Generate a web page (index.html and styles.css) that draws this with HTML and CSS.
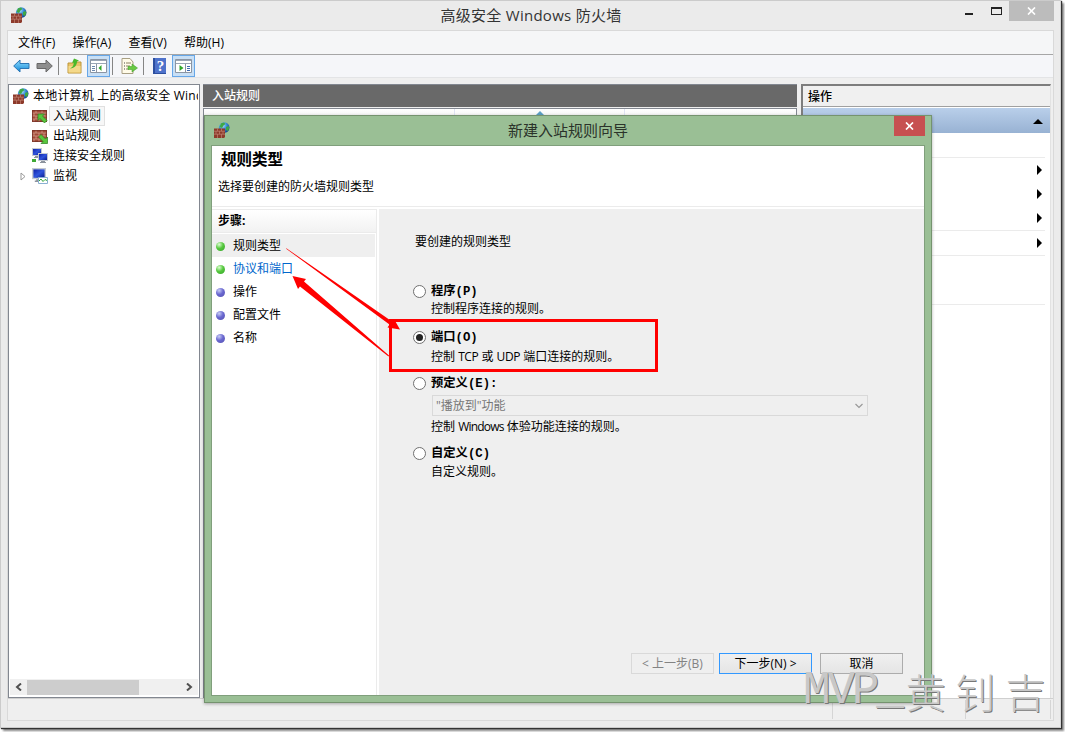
FILE: index.html
```
<!DOCTYPE html>
<html lang="zh-CN">
<head>
    <meta charset="UTF-8">
    <title>高级安全 Windows 防火墙</title>
    <link rel="stylesheet" href="styles.css">
</head>
<body>
    <svg class="defs" width="0" height="0">
        <defs>
            <radialGradient id="globe-fill" cx="35%" cy="30%" r="75%">
                <stop offset="0" stop-color="#b5e8ff"/>
                <stop offset="0.5" stop-color="#3a8fd8"/>
                <stop offset="1" stop-color="#123f8c"/>
            </radialGradient>
            <linearGradient id="blue-arrow" x1="0" y1="0" x2="0" y2="1">
                <stop offset="0" stop-color="#8fdcff"/>
                <stop offset="1" stop-color="#1289d8"/>
            </linearGradient>
            <linearGradient id="screen-fill" x1="0" y1="0" x2="1" y2="1">
                <stop offset="0" stop-color="#1022a8"/>
                <stop offset="0.5" stop-color="#2f55dd"/>
                <stop offset="1" stop-color="#0a1c90"/>
            </linearGradient>
            <symbol id="firewall" viewBox="0 0 16 16">
                <circle cx="10.2" cy="5.5" r="5.3" fill="url(#globe-fill)"/>
                <path d="M7 1.2l3-.7 1.5 1.5-2 1.5L8 6 5.5 5zM12 5l2.5-1 .8 2-1.3 3-2-1z" fill="#3fa845"/>
                <path d="M0 6.5h11V15l-1 1H0z" fill="#8d3a2b"/>
                <path d="M0 9.2h11M0 12.2h11M3.5 6.5v2.7M7.5 6.5v2.7M2 9.2v3M5.5 9.2v3M9 9.2v3M3.5 12.2V16M7.5 12.2V16" stroke="#c98d7c" stroke-width=".6"/>
            </symbol>
            <symbol id="bricks" viewBox="0 0 15 12">
                <path d="M0 0h15v12H0z" fill="#a14a38"/>
                <path d="M0 3h15M0 6h15M0 9h15M4 0v3M10 0v3M2 3v3M7 3v3M12 3v3M4 6v3M10 6v3M2 9v3M7 9v3M12 9v3" stroke="#d5a594" stroke-width=".7"/>
                <path d="M.4 .4h14.2v11.2H.4z" fill="none" stroke="#713026" stroke-width=".8"/>
            </symbol>
            <symbol id="screen" viewBox="0 0 10 10">
                <path d="M0 0h10v8H0z" fill="#c5cad2"/>
                <path d="M1 1h8v6H1z" fill="url(#screen-fill)"/>
                <path d="M3 8h4v1h1v1H2V9h1z" fill="#8d949e"/>
            </symbol>
        </defs>
    </svg>

    <div class="window">
        <div class="titlebar">
            <svg class="app-icon" width="16" height="16"><use href="#firewall"/></svg>
            <h1>高级安全 Windows 防火墙</h1>
            <div class="window-buttons">
                <svg class="min" width="26" height="20"><path d="M0 13h8v2H0z" fill="#222"/></svg>
                <svg class="max" width="18" height="20"><path d="M0 7h11v8H0zM1 9v5h9V9z" fill="#222" fill-rule="evenodd"/></svg>
                <div class="close"><svg width="9" height="8"><path d="M1 .5l7 7M8 .5l-7 7" stroke="#fff" stroke-width="1.7"/></svg></div>
            </div>
        </div>

        <div class="client">
            <div class="menubar">
                <span>文件(F)</span><span>操作(A)</span><span>查看(V)</span><span>帮助(H)</span>
            </div>
            <div class="toolbar">
                <svg width="17" height="14" viewBox="0 0 17 14"><path d="M.7 7L7 1v3.5h9v5H7V13z" fill="url(#blue-arrow)" stroke="#2b76b5"/></svg>
                <svg class="forward" width="17" height="14" viewBox="0 0 17 14"><path d="M16.3 7L10 1v3.5H1v5h9V13z" fill="#8e8e8e" stroke="#686868"/></svg>
                <i class="sep"></i>
                <svg class="folder" width="16" height="16" viewBox="0 0 16 16"><path d="M1 5h5l1-1h7v11H1z" fill="#e9c468" stroke="#bd963b"/><path d="M1.5 8h12v6.5h-12z" fill="#f4d98b"/><path d="M3 10.500C6 9 7 7 6.500 4.500L5 5l2-4.500 5 2-2 1C10 7 8 10 3 10.500z" fill="#49b92c"/></svg>
                <div class="tool-active tree-toggle">
                    <svg width="17" height="16" viewBox="0 0 17 16"><path d="M.5 1.5h16v13H.5z" fill="#fff" stroke="#8b95a3"/><path d="M1 2h15v1H1zM1 5h15v1H1z" fill="#9aa6b6"/><path d="M6.5 6v8" stroke="#8b95a3"/><path d="M2 8.500h3M2 10.500h3M2 12.500h3" stroke="#6b88ad"/><path d="M11.500 7v6l-3-3z" fill="#30a72a"/></svg>
                </div>
                <i class="sep sep-tight"></i>
                <svg width="17" height="16" viewBox="0 0 17 16"><path d="M1 .5h8L12 4v11.5H1z" fill="#fffbe8" stroke="#a89f83"/><path d="M3 5h1M3 8h1M3 11h1" stroke="#444"/><path d="M5 5h5M5 8h4M5 11h3" stroke="#8a8060"/><path d="M7 8.5h4V6l5.5 4-5.5 4v-2.5H7z" fill="#69c943" stroke="#389b24" stroke-width=".5"/></svg>
                <i class="sep"></i>
                <svg class="help" width="13" height="16"><path d="M0 0h13v16H0z" fill="#2c4f9f"/><path d="M2 0h11v15H2z" fill="#4e72cb"/><text x="7.5" y="13" text-anchor="middle">?</text></svg>
                <div class="tool-active action-toggle">
                    <svg width="17" height="16" viewBox="0 0 17 16"><path d="M.5 1.5h16v13H.5z" fill="#fff" stroke="#8b95a3"/><path d="M1 2h15v1H1zM1 5h15v1H1z" fill="#9aa6b6"/><path d="M10.5 6v8" stroke="#8b95a3"/><path d="M12 8.500h3M12 10.500h3M12 12.500h3" stroke="#3d69b0"/><path d="M4.500 7v6l4-3z" fill="#30a72a"/></svg>
                </div>
            </div>

            <div class="panes">
                <div class="tree">
                    <div class="row root"><svg width="16" height="16"><use href="#firewall"/></svg><span>本地计算机 上的高级安全 Wind</span></div>
                    <div class="row"><svg width="16" height="15"><use href="#bricks" y="1" width="15" height="12"/><path d="M6 5h6.500l-2 2 4.500 4.500-2.500 2.500L8 9.500l-2 2z" fill="#58c63d" stroke="#2b7f20" stroke-width=".7"/></svg><span class="selected">入站规则</span></div>
                    <div class="row"><svg width="16" height="15"><use href="#bricks" y="1" width="15" height="12"/><path d="M15.500 14.500H9l2-2L6.500 8 9 5.500l4.500 4.500 2-2z" fill="#58c63d" stroke="#2b7f20" stroke-width=".7"/></svg><span>出站规则</span></div>
                    <div class="row"><svg width="16" height="16"><use href="#screen" width="10" height="10"/><use href="#screen" x="6" y="5" width="10" height="10"/><path d="M0 11h4v3H0z" fill="#3fa935"/></svg><span>连接安全规则</span></div>
                    <div class="row"><svg class="expander" width="6" height="9"><path d="M1 1l4 3.5L1 8z" fill="#fff" stroke="#999"/></svg><svg width="16" height="16"><use href="#screen" width="14" height="14"/><path d="M6.5 9.5h9v6h-9z" fill="#fff" stroke="#8ab0d2"/><path d="M7 13l2-2 2 2.5 2-2 2 1" fill="none" stroke="#30a636"/></svg><span>监视</span></div>
                    <div class="scrollbar">
                        <svg width="7" height="8"><path d="M6 .5L2 4l4 3.5" fill="none" stroke="#505050" stroke-width="2"/></svg>
                        <div class="thumb"></div>
                        <svg width="7" height="8"><path d="M1 .5L5 4 1 7.5" fill="none" stroke="#505050" stroke-width="2"/></svg>
                    </div>
                </div>
                <div class="rules">
                    <h2>入站规则</h2>
                    <div class="rules-list">
                        <div class="columns">
                            <i></i>
                            <i class="sorted"><svg width="8" height="4"><path d="M4 0l4 4H0z" fill="#5c9fc4"/></svg></i>
                        </div>
                    </div>
                </div>
                <div class="actions">
                    <h2>操作</h2>
                    <div class="action-group"><svg width="10" height="5"><path d="M5 0l5 5H0z"/></svg></div>
                    <div class="action first"></div>
                    <div class="action"><svg width="5" height="10"><path d="M0 0l5 5-5 5z"/></svg></div>
                    <div class="action"><svg width="5" height="10"><path d="M0 0l5 5-5 5z"/></svg></div>
                    <div class="action line"><svg width="5" height="10"><path d="M0 0l5 5-5 5z"/></svg></div>
                    <div class="action line"><svg width="5" height="10"><path d="M0 0l5 5-5 5z"/></svg></div>
                    <div class="action last"></div>
                </div>
            </div>
            <div class="statusbar"><i></i><i></i><i></i></div>
        </div>
    </div>

    <div class="dialog">
        <div class="dialog-title">
            <svg width="16" height="16"><use href="#firewall"/></svg>
            <h2>新建入站规则向导</h2>
            <div class="dialog-close"><svg width="9" height="8"><path d="M1 .5l7 7M8 .5l-7 7" stroke="#fff" stroke-width="1.7"/></svg></div>
        </div>
        <div class="dialog-body">
            <div class="heading">
                <h3>规则类型</h3>
                <p>选择要创建的防火墙规则类型</p>
            </div>
            <div class="wizard">
                <div class="steps">
                    <h4>步骤:</h4>
                    <ul>
                        <li class="done current">规则类型</li>
                        <li class="done link">协议和端口</li>
                        <li>操作</li>
                        <li>配置文件</li>
                        <li>名称</li>
                    </ul>
                </div>
                <div class="page">
                    <p class="question">要创建的规则类型</p>
                    <div class="option program">
                        <i class="radio"></i>
                        <div><b>程序(P)</b><p>控制程序连接的规则。</p></div>
                    </div>
                    <div class="option port">
                        <i class="radio checked"></i>
                        <div><b>端口(O)</b><p>控制 <span class="latin">TCP</span> 或 <span class="latin">UDP</span> 端口连接的规则。</p></div>
                    </div>
                    <div class="option predefined">
                        <i class="radio"></i>
                        <div>
                            <b>预定义(E):</b>
                            <div class="select"><span>"播放到"功能</span><svg width="8" height="6"><path d="M.5 1L4 4.500 7.500 1" fill="none" stroke="#999" stroke-width="1.2"/></svg></div>
                            <p>控制 <span class="latin product">Windows</span> 体验功能连接的规则。</p>
                        </div>
                    </div>
                    <div class="option custom">
                        <i class="radio"></i>
                        <div><b>自定义(C)</b><p>自定义规则。</p></div>
                    </div>
                    <div class="buttons">
                        <button class="back" disabled>&lt; 上一步(B)</button>
                        <button class="next">下一步(N) &gt;</button>
                        <button class="cancel">取消</button>
                    </div>
                </div>
            </div>
        </div>
    </div>

    <!-- red callout around the port option -->
    <div class="callout"></div>
    <svg class="arrows" width="1065" height="732">
        <path d="M286 248l.500 1L389.500 324.500l-2 3L400 329.500l-6-10.500-2 2.500z" fill="#f00"/>
        <path d="M389 355.500l-.500 1L300 286.500l-2 2.500-5.500-13 13.500 3-2 2.500z" fill="#f00"/>
    </svg>
    <div class="watermark"><span class="mvp">MVP_</span><span class="name">黄钊吉</span></div>
</body>
</html>
```
FILE: styles.css
```
* {
    box-sizing: border-box;
}
body {
    margin: 0;
    width: 1065px;
    height: 732px;
    overflow: hidden;
    background: #fff;
    font: 12px/16px "Open Sans", "Noto Sans CJK SC", sans-serif;
    color: #000;
}
h1, h2, h3, h4, p, ul {
    margin: 0;
    padding: 0;
    font-size: 12px;
    font-weight: normal;
}
svg {
    display: block;
    flex: none;
}
.defs {
    position: absolute;
}
.window {
    width: 1061px;
    height: 728px;
    border: 1px solid #cbcbcb;
    border-right-color: #d4d4d4;
    background: #ebebeb;
    padding: 0 6px 0 7px;
    box-shadow: 1px 1px 1px #333, 3px 3px 2px #888;
}
.titlebar {
    display: flex;
    height: 29px;
    padding-left: 3px;
}
.app-icon {
    margin-top: 6px;
}
.titlebar h1 {
    flex: 1;
    padding-left: 71px;
    font-size: 15px;
    line-height: 29px;
    text-align: center;
    letter-spacing: .27px;
    color: #333;
}
.window-buttons {
    display: flex;
    width: 90px;
}
.window-buttons .min {
    margin-left: 1px;
}
.window-buttons .max, .window-buttons .min {
    margin-top: -1px;
}
.close {
    display: flex;
    align-items: center;
    justify-content: center;
    width: 45px;
    height: 20px;
    background: #bcbcbc;
}
.client {
    width: 1047px;
    height: 691px;
    margin-left: -1px;
    border: 1px solid #d9d9d9;
    background: #efefef;
}
.menubar {
    display: flex;
    gap: 17.3px;
    height: 24px;
    padding: 4px 10px 0;
    background: #f5f6f7;
    border-bottom: 1px solid #a6a6a6;
}
.toolbar {
    display: flex;
    align-items: center;
    height: 23px;
    padding-left: 5px;
    background: #f5f6f9;
    border-bottom: 1px solid #e3e4e6;
}
.toolbar .forward {
    margin-left: 6px;
}
.sep {
    width: 1px;
    height: 18px;
    margin: 0 8px 0 5px;
    background: #858585;
}
.sep-tight {
    margin-left: 2px;
}
.tool-active {
    display: flex;
    align-items: center;
    justify-content: center;
    width: 23px;
    height: 22px;
    background: #c8dff5;
    border: 1px solid #66a7e8;
}
.tree-toggle {
    margin-left: 4px;
}
.action-toggle {
    margin-left: 6px;
}
.help {
    margin-left: 1px;
}
.help text {
    font: bold 15px "Liberation Serif", serif;
    fill: #fff;
}
.panes {
    display: flex;
    height: 614px;
    margin-top: 6px;
}
.tree {
    display: flex;
    flex-direction: column;
    width: 192px;
    height: 614px;
    border: 1px solid #828790;
    background: #fff;
    padding: 1px;
    overflow: hidden;
}
.row {
    display: flex;
    align-items: center;
    height: 20px;
    padding-left: 22px;
    white-space: nowrap;
    position: relative;
}
.row svg {
    margin-right: 2px;
}
.row .expander {
    position: absolute;
    left: 10px;
}
.row span {
    padding: 0 3px;
    line-height: 18px;
}
.root {
    padding-left: 3px;
    overflow: hidden;
}
.root span {
    padding: 0 0 0 2px;
    letter-spacing: .2px;
}
.selected {
    outline: 1px solid #e0e0e0;
    background: #f7f7f7;
}
.scrollbar {
    display: flex;
    align-items: center;
    height: 16px;
    margin-top: auto;
    margin-bottom: 1px;
    background: #f0f0f0;
    padding: 0 5px;
}
.thumb {
    width: 112px;
    height: 15px;
    margin-left: 5px;
    margin-right: auto;
    background: #cdcdcd;
}
.rules {
    width: 594px;
    margin-left: 3px;
}
.rules h2 {
    height: 23px;
    padding: 3px 9px 0;
    border-top: 1px solid #828790;
    background: #696969;
    color: #fff;
    font-weight: 500;
}
.rules-list {
    height: 590px;
    margin-top: 1px;
    border: 1px solid #828790;
    background: #fff;
}
.columns {
    display: flex;
    height: 8px;
    background: linear-gradient(#fff, #f3f3f3);
}
.columns i {
    width: 251px;
    border-right: 1px solid #dfe3f3;
}
.columns .sorted {
    width: 170px;
    padding: 2px 0 0 81px;
}
.actions {
    width: 250px;
    margin-left: 4px;
    background: #fff;
    border-left: 2px solid #7d7d7d;
    border-top: 2px solid #7d7d7d;
    border-right: 1px solid #e2e2e2;
}
.actions h2 {
    height: 21px;
    padding: 3px 5px 0;
    background: #f0f0f0;
    border-bottom: 1px solid #a0a0a0;
    font-weight: 500;
}
.action-group {
    height: 26px;
    padding: 11px 7px 0;
    border-top: 1px solid #fff;
    background: linear-gradient(#b9cfea, #98b2d3);
}
.action-group svg {
    margin-left: auto;
}
.action {
    display: flex;
    align-items: center;
    justify-content: flex-end;
    height: 24px;
    margin-right: 5px;
    padding-right: 3px;
}
.action.line {
    height: 25px;
    border-bottom: 1px solid #ebebeb;
}
.action.first {
    height: 25px;
    border-bottom: 1px solid #ebebeb;
}
.action.last {
    height: 49px;
    border-bottom: 1px solid #ebebeb;
}
.statusbar {
    display: flex;
    height: 22px;
    border-top: 1px solid #cfcfcf;
    padding: 1px 2px 1px 0;
    justify-content: flex-end;
}
.statusbar i {
    border-right: 1px solid #d5d5d5;
    width: 133px;
}
.statusbar i:last-child {
    width: 85px;
}

/* wizard floats above the console */
.dialog {
    position: absolute;
    left: 204px;
    top: 115px;
    width: 728px;
    height: 588px;
    padding: 0 6px;
    border: 1px solid #75936f;
    background: #9abf95;
    box-shadow: 0 1px 3px rgba(0, 0, 0, .3);
}
.dialog-title {
    display: flex;
    height: 29px;
    padding-left: 3px;
}
.dialog-title > svg {
    margin-top: 6px;
}
.dialog-title h2 {
    flex: 1;
    padding-left: 12px;
    font-size: 15px;
    line-height: 29px;
    text-align: center;
    color: #2b332a;
}
.dialog-close {
    display: flex;
    align-items: center;
    justify-content: center;
    width: 31px;
    height: 20px;
    background: #c75050;
}
.dialog-body {
    width: 714px;
    height: 551px;
    border: 1px solid #809f7c;
    background: #fff;
}
.heading {
    height: 61px;
    border-bottom: 1px solid #ebebeb;
    padding: 3px 6px 0;
}
.heading h3 {
    padding-left: 3px;
    font-size: 15.5px;
    line-height: 21px;
    font-weight: bold;
}
.heading p {
    margin-top: 9px;
}
.wizard {
    display: flex;
    height: 486px;
    margin-top: 2px;
}
.steps {
    width: 165px;
    border-right: 1px solid #ebebeb;
}
.steps h4 {
    height: 24px;
    padding: 3px 6px 0;
    border: 1px solid #ebebeb;
    border-left: 0;
    border-right: 0;
    background: linear-gradient(#fff, #f2f2f2);
    font-weight: bold;
}
.steps ul {
    width: 163px;
    margin-top: 1px;
    list-style: none;
}
.steps li {
    display: flex;
    align-items: center;
    height: 23px;
    padding: 1px 0 0 4px;
}
.steps li::before {
    content: "";
    width: 9px;
    height: 9px;
    margin-right: 8px;
    border-radius: 50%;
    background: radial-gradient(circle at 35% 28%, #c8cdf5, #6a68d0 45%, #5550b0);
}
.steps li.done::before {
    background: radial-gradient(circle at 35% 28%, #dcffd2, #56c83e 45%, #32a328);
}
.steps .current {
    background: #efefef;
}
.steps .link {
    color: #0066cc;
}
.page {
    flex: 1;
    margin-left: 2px;
    background: #efefef;
    padding: 25px 0 0 34px;
}
.question {
    margin-left: 2px;
}
.option {
    display: flex;
    gap: 5px;
}
.option b {
    display: block;
    padding-top: 1px;
    font: bold 12.3px/16px "Liberation Mono", "Noto Sans CJK SC", monospace;
}
.option .latin {
    letter-spacing: -.4px;
}
.option .product {
    letter-spacing: -.8px;
}
.program {
    height: 46px;
    margin-top: 33px;
}
.option p {
    margin-top: 1px;
}
.port {
    height: 46px;
}
.port p {
    margin-top: 3px;
}
.predefined {
    height: 70px;
}
.custom p {
    margin-top: 2px;
}
.radio {
    display: flex;
    align-items: center;
    justify-content: center;
    width: 13px;
    height: 13px;
    margin-top: 2px;
    border: 1px solid #707070;
    border-radius: 50%;
    background: #fff;
}
.radio.checked::after {
    content: "";
    width: 7px;
    height: 7px;
    border-radius: 50%;
    background: #222;
}
.select {
    display: flex;
    align-items: center;
    justify-content: space-between;
    width: 436px;
    height: 21px;
    margin: 3px 0 3px 1px;
    padding: 1px 4px 0 3px;
    border: 1px solid #d9d9d9;
    color: #777;
}
.predefined p {
    margin-top: 0;
}
.buttons {
    display: flex;
    margin: 173px 0 0 218px;
}
button {
    height: 21px;
    padding: 1px 0 0;
    border: 1px solid #acacac;
    background: linear-gradient(#f0f0f0, #e5e5e5);
    font: inherit;
    color: #000;
}
.back {
    width: 83px;
    border-color: #d9d9d9;
    background: #efefef;
    color: #838383;
}
.next {
    width: 93px;
    margin: 0 8px 0 5px;
    border-color: #3399ff;
}
.cancel {
    width: 83px;
}
.callout {
    position: absolute;
    left: 389px;
    top: 319px;
    width: 269px;
    height: 53px;
    border: 3px solid #f00;
}
.arrows {
    position: absolute;
    left: 0;
    top: 0;
}
.watermark {
    position: absolute;
    left: 803px;
    top: 664px;
    display: flex;
    line-height: 54px;
    color: #c8c8c8;
    text-shadow: 1px 1px 0 #777;
    white-space: nowrap;
}
.mvp {
    font-family: "Liberation Mono", monospace;
    font-size: 46px;
    letter-spacing: -3.2px;
}
.name {
    margin-left: 5px;
    font-family: "Noto Sans CJK SC", sans-serif;
    font-size: 40px;
    font-weight: 300;
    letter-spacing: 10px;
}
```
